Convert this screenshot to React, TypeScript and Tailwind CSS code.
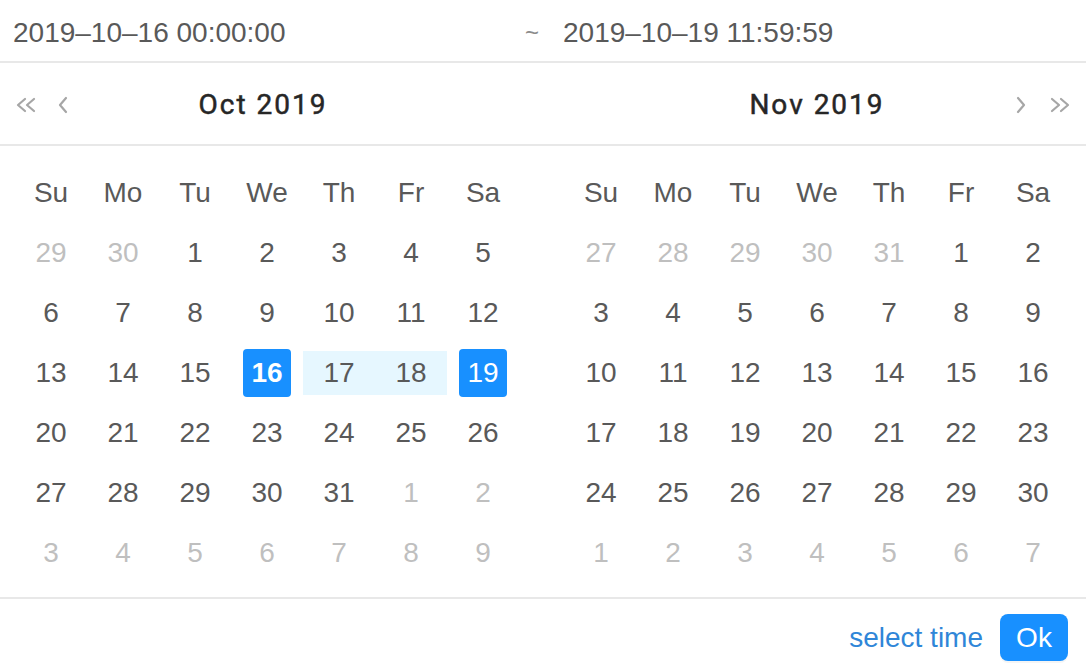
import React from 'react';

// ─── Data ─────────────────────────────────────────────────────────────────────

const WEEK = ['Su', 'Mo', 'Tu', 'We', 'Th', 'Fr', 'Sa'];

type Day = { n: number; muted?: boolean };

function buildMonth(prevTail: number[], days: number, nextHead: number): Day[] {
  const cells: Day[] = prevTail.map((n) => ({ n, muted: true }));
  for (let i = 1; i <= days; i++) cells.push({ n: i });
  for (let i = 1; i <= nextHead; i++) cells.push({ n: i, muted: true });
  return cells;
}

const OCT = buildMonth([29, 30], 31, 9);
const NOV = buildMonth([27, 28, 29, 30, 31], 30, 7);

const RANGE_START = 16;
const RANGE_END = 19;

// ─── Icons ────────────────────────────────────────────────────────────────────

function Chevron({ dir }: { dir: 'left' | 'right' }) {
  return (
    <svg width="12" height="18" viewBox="0 0 12 18" fill="none" stroke="#a6a6a6" strokeWidth="2.2" strokeLinecap="round" strokeLinejoin="round">
      {dir === 'left' ? <path d="M9 2 L3 9 L9 16" /> : <path d="M3 2 L9 9 L3 16" />}
    </svg>
  );
}

function DoubleChevron({ dir }: { dir: 'left' | 'right' }) {
  return (
    <svg width="22" height="18" viewBox="0 0 22 18" fill="none" stroke="#a6a6a6" strokeWidth="2.2" strokeLinecap="round" strokeLinejoin="round">
      {dir === 'left' ? (
        <>
          <path d="M10 3 L3 9 L10 15" />
          <path d="M19 3 L12 9 L19 15" />
        </>
      ) : (
        <>
          <path d="M3 3 L10 9 L3 15" />
          <path d="M12 3 L19 9 L12 15" />
        </>
      )}
    </svg>
  );
}

// ─── Month grid ───────────────────────────────────────────────────────────────

function MonthGrid({ cells, active }: { cells: Day[]; active?: boolean }) {
  return (
    <div className="w-[504px] grid grid-cols-7">
      {WEEK.map((w) => (
        <div key={w} className="h-[60px] flex items-center justify-center text-[#595959]">
          {w}
        </div>
      ))}
      {cells.map((c, i) => {
        const inMonth = active && !c.muted;
        const isEdge = inMonth && (c.n === RANGE_START || c.n === RANGE_END);
        const inRange = inMonth && c.n > RANGE_START && c.n < RANGE_END;
        return (
          <div key={i} className="h-[60px] flex items-center justify-center">
            {isEdge ? (
              <div
                className={`w-[48px] h-[48px] rounded-[4px] bg-[#1890ff] text-white flex items-center justify-center ${
                  c.n === RANGE_START ? 'font-bold' : ''
                }`}
              >
                {c.n}
              </div>
            ) : inRange ? (
              <div className="w-full h-[44px] bg-[#e6f7ff] text-[#595959] flex items-center justify-center">
                {c.n}
              </div>
            ) : (
              <span className={c.muted ? 'text-[#bfbfbf]' : 'text-[#595959]'}>{c.n}</span>
            )}
          </div>
        );
      })}
    </div>
  );
}

// ─── Main ─────────────────────────────────────────────────────────────────────

export default function App() {
  const titleFont = { fontFamily: 'Roboto, "Liberation Sans", sans-serif' };
  return (
    <div
      className="w-[1086px] h-[668px] bg-white text-[28px] leading-none overflow-hidden"
      style={{ fontFamily: '"Liberation Sans", Arial, sans-serif' }}
    >
      {/* Inputs */}
      <div className="h-[63px] border-b-2 border-[#e8e8e8] grid grid-cols-2 items-center pt-[4px] text-[#595959]">
        <div className="flex items-center justify-between pl-[13px] pr-[4px]">
          <span>2019–10–16 00:00:00</span>
          <span className="text-[24px] text-[#8c8c8c]">~</span>
        </div>
        <div className="pl-[20px]">2019–10–19 11:59:59</div>
      </div>

      {/* Month headers */}
      <div className="h-[83px] border-b-2 border-[#e8e8e8] grid grid-cols-2 items-center pt-[2px]">
        <div className="relative h-full flex items-center w-[504px] ml-[15px]">
          <div className="absolute left-0 flex items-center gap-[20px]">
            <DoubleChevron dir="left" />
            <Chevron dir="left" />
          </div>
          <div className="w-full text-center pr-[8px] text-[#262626] font-normal tracking-[2px]" style={titleFont}>
            <span className="[-webkit-text-stroke:0.5px_#262626]">Oct 2019</span>
          </div>
        </div>
        <div className="relative h-full flex items-center w-[504px] ml-[22px]">
          <div className="w-full text-center text-[#262626] font-normal tracking-[2px]" style={titleFont}>
            <span className="[-webkit-text-stroke:0.5px_#262626]">Nov 2019</span>
          </div>
          <div className="absolute -right-[2px] flex items-center gap-[22px]">
            <Chevron dir="right" />
            <DoubleChevron dir="right" />
          </div>
        </div>
      </div>

      {/* Calendars */}
      <div className="h-[453px] border-b-2 border-[#e8e8e8] grid grid-cols-2 pt-[17px]">
        <div className="pl-[15px]">
          <MonthGrid cells={OCT} active />
        </div>
        <div className="pl-[22px]">
          <MonthGrid cells={NOV} />
        </div>
      </div>

      {/* Footer */}
      <div className="h-[69px] flex items-center justify-end pr-[18px] pt-[8px] gap-[17px]">
        <span className="text-[#2f86d8]">select time</span>
        <button className="h-[47px] w-[68px] rounded-[8px] bg-[#1890ff] text-white text-[28px] shadow-[0_2px_0_rgba(0,0,0,0.04)]">
          Ok
        </button>
      </div>
    </div>
  );
}
